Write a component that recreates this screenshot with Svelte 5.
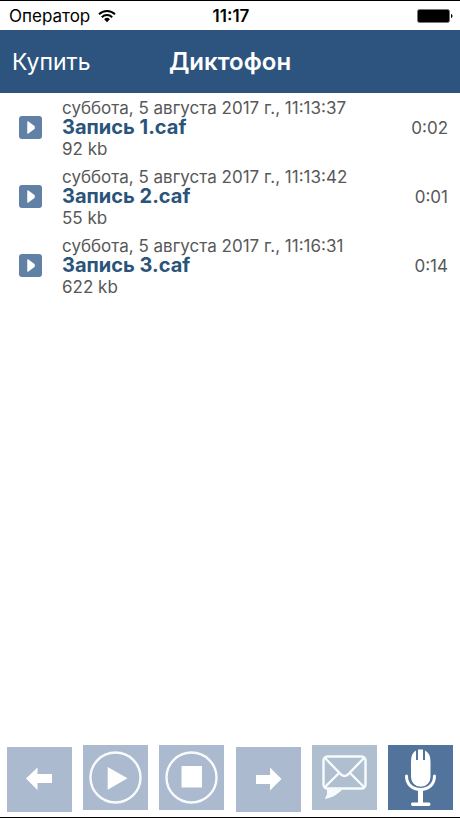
<script>
  let recordings = $state([
    { name: 'Запись 1.caf', date: 'суббота, 5 августа 2017 г., 11:13:37', size: '92 kb', length: '0:02' },
    { name: 'Запись 2.caf', date: 'суббота, 5 августа 2017 г., 11:13:42', size: '55 kb', length: '0:01' },
    { name: 'Запись 3.caf', date: 'суббота, 5 августа 2017 г., 11:16:31', size: '622 kb', length: '0:14' },
  ])
</script>

<div class="app">
  <div class="status">
    <div class="carrier">
      <span>Оператор</span>
      <svg width="18" height="14" viewBox="0 0 18 14" fill="none" stroke="#000" stroke-width="2">
        <path d="M1 5.2a11.4 11.4 0 0 1 16 0" />
        <path d="M3.8 8.2a7.4 7.4 0 0 1 10.4 0" />
        <path d="M9 13.2 6.1 10.3a4.1 4.1 0 0 1 5.8 0z" fill="#000" stroke="none" />
      </svg>
    </div>
    <span class="clock">11:17</span>
    <svg class="battery" width="36" height="14" viewBox="0 0 36 14">
      <rect x="0.5" y="0.5" width="32" height="13" rx="2" fill="#000" stroke="#777" />
      <path d="M34 5c2 .6 2 3.4 0 4z" fill="#000" />
    </svg>
  </div>

  <header>
    <button class="buy">Купить</button>
    <h1>Диктофон</h1>
  </header>

  <ul>
    {#each recordings as r}
      <li>
        <button class="play" aria-label="Воспроизвести {r.name}">
          <svg width="23" height="23" viewBox="0 0 23 23">
            <path d="M9 6 15 10.5v2L9 17z" fill="#fff" stroke="#fff" stroke-width="1.5" stroke-linejoin="round" />
          </svg>
        </button>
        <div class="info">
          <span class="date">{r.date}</span>
          <strong>{r.name}</strong>
          <span class="size">{r.size}</span>
        </div>
        <span class="length">{r.length}</span>
      </li>
    {/each}
  </ul>

  <footer>
    <button class="skip" aria-label="Назад">
      <svg viewBox="0 0 65 65"><path d="M19 31.5 30.5 20.5V27H45v9H30.5v7z" fill="#fff" /></svg>
    </button>
    <button aria-label="Воспроизвести">
      <svg viewBox="0 0 65 65">
        <circle cx="32.5" cy="32.5" r="25" fill="none" stroke="#f8fbfd" stroke-width="2.4" />
        <path d="M24.7 22 44.5 33.3 24.7 44.7z" fill="#fff" />
      </svg>
    </button>
    <button aria-label="Стоп">
      <svg viewBox="0 0 65 65">
        <circle cx="32.5" cy="32.5" r="25" fill="none" stroke="#f8fbfd" stroke-width="2.4" />
        <path d="M22.5 21H43v21.5H22.5z" fill="#fff" />
      </svg>
    </button>
    <button class="skip" aria-label="Вперёд">
      <svg viewBox="0 0 65 65"><path d="M45.5 32 34 20.500V28H20v9h14v6.500z" fill="#fff" /></svg>
    </button>
    <button class="mail" aria-label="Отправить">
      <svg viewBox="0 0 65 65" fill="none" stroke="#f8fbfd" stroke-width="2.400" stroke-linejoin="round">
        <rect x="11.500" y="11.500" width="42" height="32" rx="4" />
        <path d="M13 13 29 29.500q3.500 3 7 0L52 13M13 42 27 28M52 42 38 28" />
        <path d="M15.500 44.500q1 5-2 9 9-1.500 16-8.500z" fill="#f8fbfd" stroke-width="1" />
      </svg>
    </button>
    <button class="record" aria-label="Запись">
      <svg viewBox="0 0 65 65">
        <path d="M23 17q0-9 5-11.500V15h2V4.500h5V15h2V5.500q5.500 2.500 5.500 11.500v15a9.750 9.750 0 0 1-19.500 0z" fill="#fff" />
        <path d="M18.500 31c0 8.500 6 13.500 14 13.500s14-5 14-13.500" fill="none" stroke="#fff" stroke-width="3" stroke-linecap="round" />
        <path d="M30 44h5v13.500h6q1.500 0 1.500 1.700t-1.500 1.800H24.500Q23 61 23 59.200t1.500-1.700H30z" fill="#fff" />
      </svg>
    </button>
  </footer>
</div>

<style>
  :global(body) { background: #fff; }
  .app {
    display: flex;
    flex-direction: column;
    box-sizing: border-box;
    min-height: 100vh;
    border-top: 1px solid #000;
    border-bottom: 1px solid #000;
    font-family: Inter, Roboto, sans-serif;
    color: #585858;
  }
  button {
    padding: 0;
    border: none;
    font: inherit;
    color: #fff;
  }
  svg { display: block; }

  .status {
    display: grid;
    grid-template-columns: 1fr auto 1fr;
    align-items: center;
    height: 29px;
    padding: 0 7px 0 9px;
    font-size: 17px;
    color: #000;
  }
  .carrier { display: flex; align-items: center; gap: 8px; }
  .clock { font-weight: 600; }
  .battery { justify-self: end; }

  header {
    display: grid;
    grid-template-columns: 1fr auto 1fr;
    align-items: center;
    height: 63px;
    padding: 0 12px;
    background: #2d547f;
    color: #fff;
  }
  .buy { justify-self: start; background: none; font-size: 23px; }
  h1 { margin: 0; font-size: 24px; font-weight: 600; }

  ul { flex: 1; margin: 0; padding: 0; list-style: none; }
  li {
    display: flex;
    align-items: center;
    height: 69px;
    padding: 0 12px 0 19px;
    font-size: 17px;
  }
  .play { border-radius: 3px; background: #6080a5; }
  .info {
    display: flex;
    flex: 1;
    flex-direction: column;
    padding-top: 6px;
    margin-left: 20px;
  }
  .date { line-height: 18px; }
  strong { font-size: 20px; font-weight: 700; line-height: 20px; color: #2a5479; }
  .size { line-height: 25px; }

  footer {
    display: flex;
    align-items: flex-start;
    justify-content: space-between;
    padding: 0 7px 5px;
  }
  footer button { width: 65px; height: 65px; background: #abbace; }
  footer .skip { margin-top: 2px; }
  footer .mail { background: #afbfcf; }
  footer .record { background: #52749c; }
</style>
